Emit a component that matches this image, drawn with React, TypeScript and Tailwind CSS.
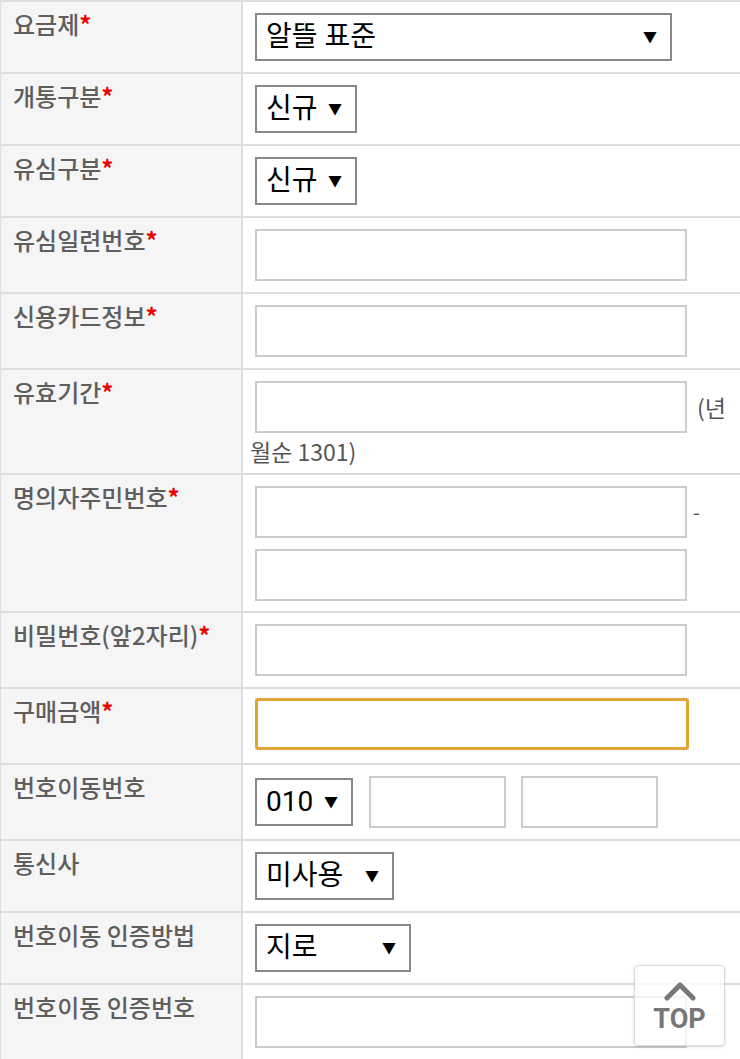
import React from 'react';

const FONT = '"Noto Sans CJK KR", "Noto Sans", sans-serif';
const SELECT_FONT = 'Roboto, "Noto Sans CJK KR", sans-serif';

const Req = () => <span className="text-[#e00] font-bold">*</span>;

const Select: React.FC<{ value: string; width: string }> = ({ value, width }) => (
  <div
    className={`${width} h-[48px] flex items-center justify-between border-2 border-[#888] bg-white pl-[9px] pr-[13px] text-[28px] text-black`}
    style={{ fontFamily: SELECT_FONT }}
  >
    <span className="leading-none">{value}</span>
    <span className="text-[14px] leading-none">▼</span>
  </div>
);

const Input: React.FC<{ width?: string; focus?: boolean }> = ({ width = 'w-[432px]', focus }) => (
  <div
    className={`${width} h-[52px] bg-white ${
      focus ? 'border-[3px] border-[#e2a534] rounded-[3px]' : 'border-2 border-[#ccc]'
    }`}
  />
);

interface RowProps {
  label: React.ReactNode;
  height: string;
  children: React.ReactNode;
}

const Row: React.FC<RowProps> = ({ label, height, children }) => (
  <div className={`flex ${height} border-b-2 border-[#ddd]`}>
    <div className="w-[242px] shrink-0 bg-[#f5f5f5] border-r-2 border-[#ddd] pl-[12px] pt-[5px] text-[24px] font-medium leading-[34px] text-[#5e5e5e] whitespace-nowrap">
      {label}
    </div>
    <div className="flex-1 pl-[12px] pt-[11px] bg-white">{children}</div>
  </div>
);

export default function App() {
  return (
    <div className="relative w-[740px] h-[1059px] overflow-hidden bg-white" style={{ fontFamily: FONT }}>
      <div className="border-t-2 border-l border-[#ddd]">
        <Row label={<>요금제<Req /></>} height="h-[72px]">
          <Select value="알뜰 표준" width="w-[417px]" />
        </Row>
        <Row label={<>개통구분<Req /></>} height="h-[72px]">
          <Select value="신규" width="w-[102px]" />
        </Row>
        <Row label={<>유심구분<Req /></>} height="h-[72px]">
          <Select value="신규" width="w-[102px]" />
        </Row>
        <Row label={<>유심일련번호<Req /></>} height="h-[76px]">
          <Input />
        </Row>
        <Row label={<>신용카드정보<Req /></>} height="h-[76px]">
          <Input />
        </Row>
        <Row label={<>유효기간<Req /></>} height="h-[105px]">
          <div className="flex items-center">
            <Input />
            <span className="ml-[10px] text-[23px] text-[#555]">(년</span>
          </div>
          <div className="-ml-[5px] mt-[3px] text-[23px] leading-[30px] text-[#555]">월순 1301)</div>
        </Row>
        <Row label={<>명의자주민번호<Req /></>} height="h-[138px]">
          <div className="flex items-center">
            <Input />
            <span className="ml-[6px] text-[20px] text-[#555]">-</span>
          </div>
          <div className="mt-[11px]">
            <Input />
          </div>
        </Row>
        <Row label={<>비밀번호(앞2자리)<Req /></>} height="h-[76px]">
          <Input />
        </Row>
        <Row label={<>구매금액<Req /></>} height="h-[76px]">
          <div className="-mt-[2px]">
            <Input width="w-[434px]" focus />
          </div>
        </Row>
        <Row label="번호이동번호" height="h-[76px]">
          <div className="flex items-center">
            <Select value="010" width="w-[98px]" />
            <div className="ml-[16px]">
              <Input width="w-[137px]" />
            </div>
            <div className="ml-[15px]">
              <Input width="w-[137px]" />
            </div>
          </div>
        </Row>
        <Row label="통신사" height="h-[72px]">
          <Select value="미사용" width="w-[139px]" />
        </Row>
        <Row label="번호이동 인증방법" height="h-[72px]">
          <Select value="지로" width="w-[156px]" />
        </Row>
        <Row label="번호이동 인증번호" height="h-[90px]">
          <Input />
        </Row>
      </div>

      <div className="absolute left-[634px] top-[965px] w-[91px] h-[81px] rounded-[4px] border border-[#ddd] bg-white/75 shadow-[0_1px_3px_rgba(0,0,0,0.15)] flex flex-col items-center pt-[15px]">
        <svg width="36" height="20" viewBox="0 0 36 20">
          <path d="M5 17 L18 4 L31 17" fill="none" stroke="#777" strokeWidth="5" strokeLinecap="round" strokeLinejoin="round" />
        </svg>
        <span
          className="mt-[5px] text-[27px] font-bold leading-none text-[#777]"
          style={{ fontFamily: 'Roboto, "Liberation Sans", sans-serif' }}
        >
          TOP
        </span>
      </div>
    </div>
  );
}
